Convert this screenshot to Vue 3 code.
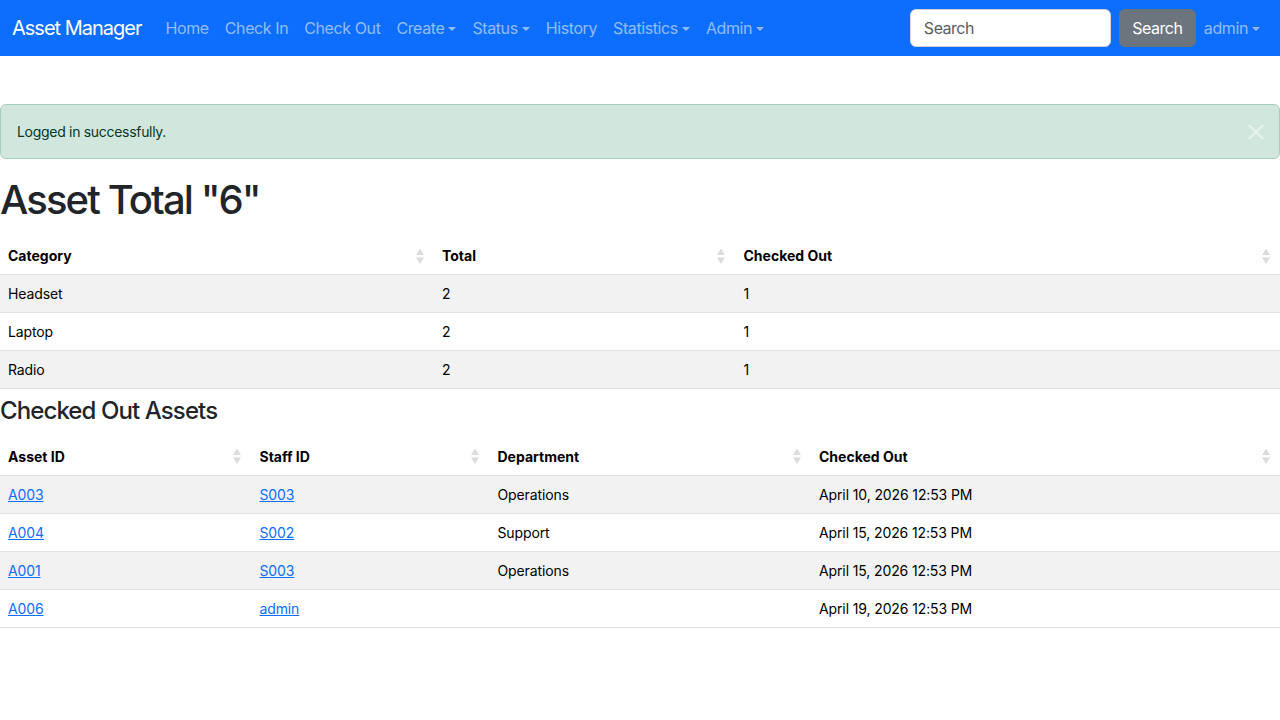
<script setup>
const navLinks = [
    { label: 'Home' },
    { label: 'Check In' },
    { label: 'Check Out' },
    { label: 'Create', caret: true },
    { label: 'Status', caret: true },
    { label: 'History' },
    { label: 'Statistics', caret: true },
    { label: 'Admin', caret: true }
]

const totalColumns = [
    { label: 'Category', width: '434px' },
    { label: 'Total', width: '301.5px' },
    { label: 'Checked Out', width: 'auto' }
]

const totals = [
    ['Headset', '2', '1'],
    ['Laptop', '2', '1'],
    ['Radio', '2', '1']
]

const assetColumns = [
    { label: 'Asset ID', width: '251.5px' },
    { label: 'Staff ID', width: '238px' },
    { label: 'Department', width: '321.5px' },
    { label: 'Checked Out', width: 'auto' }
]

const assets = [
    { id: 'A003', staff: 'S003', department: 'Operations', date: 'April 10, 2026 12:53 PM' },
    { id: 'A004', staff: 'S002', department: 'Support', date: 'April 15, 2026 12:53 PM' },
    { id: 'A001', staff: 'S003', department: 'Operations', date: 'April 15, 2026 12:53 PM' },
    { id: 'A006', staff: 'admin', department: '', date: 'April 19, 2026 12:53 PM' }
]
</script>

<template>
    <nav class="navbar">
        <a class="brand" href="#">Asset Manager</a>
        <ul class="nav-list">
            <li v-for="link in navLinks" :key="link.label">
                <a class="nav-link" :class="{ caret: link.caret }" href="#">{{ link.label }}</a>
            </li>
        </ul>
        <form class="search" @submit.prevent>
            <input class="search-input" type="text" placeholder="Search" />
            <button class="search-btn" type="submit">Search</button>
        </form>
        <a class="nav-link caret" href="#">admin</a>
    </nav>

    <main class="content">
        <div class="alert">
            <span>Logged in successfully.</span>
            <svg class="alert-close" viewBox="0 0 16 16" width="16" height="16">
                <path d="M1.5 1.5l13 13M14.5 1.5l-13 13" stroke="#000" stroke-width="2" stroke-linecap="round" fill="none" />
            </svg>
        </div>

        <h1>Asset Total "6"</h1>
        <table class="data-table">
            <colgroup>
                <col v-for="col in totalColumns" :key="col.label" :style="{ width: col.width }" />
            </colgroup>
            <thead>
                <tr>
                    <th v-for="col in totalColumns" :key="col.label">
                        {{ col.label }}
                        <svg class="sort" viewBox="0 0 8 16" width="8" height="16">
                            <path d="M4 0.5L8 7H0Z" />
                            <path d="M4 16L8 9.5H0Z" />
                        </svg>
                    </th>
                </tr>
            </thead>
            <tbody>
                <tr v-for="row in totals" :key="row[0]">
                    <td v-for="(cell, i) in row" :key="i">{{ cell }}</td>
                </tr>
            </tbody>
        </table>

        <h4>Checked Out Assets</h4>
        <table class="data-table">
            <colgroup>
                <col v-for="col in assetColumns" :key="col.label" :style="{ width: col.width }" />
            </colgroup>
            <thead>
                <tr>
                    <th v-for="col in assetColumns" :key="col.label">
                        {{ col.label }}
                        <svg class="sort" viewBox="0 0 8 16" width="8" height="16">
                            <path d="M4 0.5L8 7H0Z" />
                            <path d="M4 16L8 9.5H0Z" />
                        </svg>
                    </th>
                </tr>
            </thead>
            <tbody>
                <tr v-for="asset in assets" :key="asset.id">
                    <td><a href="#">{{ asset.id }}</a></td>
                    <td><a href="#">{{ asset.staff }}</a></td>
                    <td>{{ asset.department }}</td>
                    <td>{{ asset.date }}</td>
                </tr>
            </tbody>
        </table>
    </main>
</template>

<style>
body {
    background: #fff;
    font-family: Inter, "Liberation Sans", sans-serif;
    color: #212529;
}
</style>

<style scoped>
.navbar {
    display: flex;
    align-items: center;
    height: 56px;
    padding: 0 12px;
    box-sizing: border-box;
    background: #0d6efd;
}

.brand {
    margin-right: 16px;
    color: #fff;
    font-size: 20px;
    letter-spacing: -1px;
    text-decoration: none;
}

.nav-list {
    display: flex;
    flex: 1;
    margin: 0;
    padding: 0;
    list-style: none;
}

.nav-link {
    display: block;
    padding: 8px;
    color: rgba(255, 255, 255, 0.55);
    font-size: 16px;
    line-height: 24px;
    letter-spacing: -0.4px;
    text-decoration: none;
}

.caret::after {
    content: "";
    display: inline-block;
    margin-left: 4px;
    vertical-align: 3px;
    border-top: 4.8px solid;
    border-right: 4.8px solid transparent;
    border-left: 4.8px solid transparent;
}

.search {
    display: flex;
    gap: 8px;
}

.search-input {
    width: 201px;
    height: 38px;
    padding: 6px 13px;
    box-sizing: border-box;
    border: 1px solid #ced4da;
    border-radius: 6px;
    font: 16px Inter, sans-serif;
    letter-spacing: -0.5px;
    color: #212529;
}

.search-input::placeholder {
    color: #595c5f;
}

.search-btn {
    width: 77px;
    height: 38px;
    border: 1px solid #6c757d;
    border-radius: 6px;
    background: #6c757d;
    color: #fff;
    font: 16px Inter, sans-serif;
    letter-spacing: -0.5px;
}

.content {
    padding-top: 48px;
}

.alert {
    display: flex;
    align-items: center;
    justify-content: space-between;
    margin-bottom: 17px;
    padding: 16px;
    border: 1px solid #a3cfbb;
    border-radius: 6px;
    background: #d1e7dd;
    color: #0a3622;
    font-size: 14px;
    line-height: 21px;
    letter-spacing: -0.3px;
}

.alert-close {
    margin-right: -1px;
    opacity: 0.5;
    filter: invert(1);
}

h1 {
    margin: 0 0 13px;
    font-size: 40px;
    font-weight: 500;
    line-height: 48px;
    letter-spacing: -1.9px;
}

h4 {
    margin: 8px 0 12.2px;
    font-size: 24px;
    font-weight: 500;
    line-height: 28.8px;
    letter-spacing: -0.9px;
}

.data-table {
    width: 100%;
    border-collapse: collapse;
    table-layout: fixed;
    color: #000;
    font-size: 14px;
    line-height: 21px;
}

.data-table th,
.data-table td {
    padding: 8px;
    border-bottom: 1px solid #dee2e6;
    text-align: left;
}

.data-table td {
    letter-spacing: -0.12px;
}

.data-table th {
    position: relative;
    font-weight: 700;
}

.data-table tbody tr:nth-child(odd) {
    background: #f2f2f2;
}

.data-table a {
    color: #0d6efd;
}

.sort {
    position: absolute;
    top: 10.5px;
    right: 10.5px;
    fill: #dcdcdc;
}
</style>
